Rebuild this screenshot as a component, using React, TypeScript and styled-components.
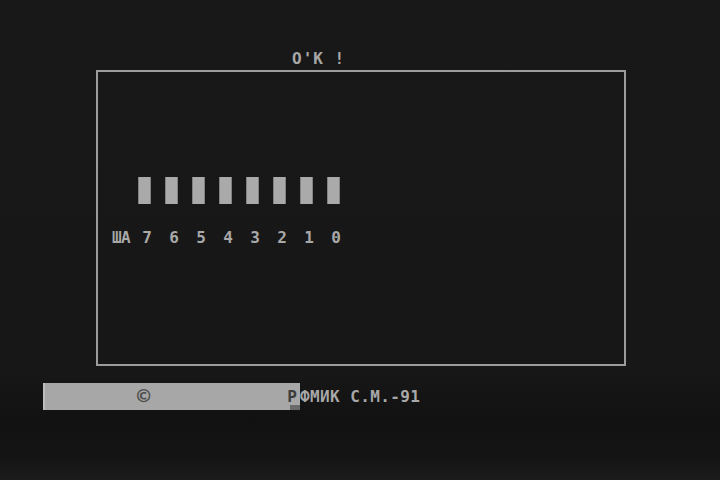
import styled, { createGlobalStyle } from 'styled-components';

const GlobalStyle = createGlobalStyle`
  html, body {
    margin: 0;
    padding: 0;
    background: #161616;
  }
`;

const Screen = styled.div`
  width: 720px;
  height: 480px;
  box-sizing: border-box;
  padding-top: 51px;
  display: flex;
  flex-direction: column;
  background: linear-gradient(
    to bottom,
    #181818 0%,
    #171717 78%,
    #111111 88%,
    #151515 96%,
    #1c1c1c 100%
  );
  font-family: 'DejaVu Sans Mono', 'Liberation Mono', monospace;
  font-weight: bold;
  font-size: 16px;
  line-height: 16px;
  color: #a8a8a8;
  overflow: hidden;
`;

const Title = styled.div`
  margin-left: 292px;
  height: 19px;
  letter-spacing: 1px;
  white-space: pre;
`;

const Frame = styled.div`
  margin-left: 96px;
  width: 530px;
  height: 296px;
  box-sizing: border-box;
  border: 2px solid #9c9c9c;
  padding: 105px 0 0 14px;
`;

const Register = styled.div`
  display: grid;
  grid-template-columns: 19px repeat(8, 27px);
  grid-template-rows: 27px 16px;
  row-gap: 26px;
`;

const Cell = styled.div`
  display: flex;
  justify-content: center;
`;

const Bit = styled.div`
  width: 13px;
  height: 27px;
  background: #aaaaaa;
  box-shadow: inset 1px 0 0 #828282, inset -1px 0 0 #828282;
`;

const Label = styled.div`
  letter-spacing: -0.6px;
  white-space: nowrap;
`;

const Digit = styled.div`
  text-align: center;
  padding-left: 5px;
`;

const Footer = styled.div`
  margin: 17px 0 0 43px;
  display: flex;
  align-items: center;
`;

const Progress = styled.div`
  width: 257px;
  height: 27px;
  box-sizing: border-box;
  background: #a7a7a7;
  border-left: 2px solid #bdbdbd;
  display: flex;
  align-items: center;
  padding-left: 92px;
  color: #4a4a4a;
  position: relative;
`;

const Copy = styled.span`
  font-size: 22px;
  line-height: 22px;
  font-weight: bold;
  color: #505050;
  flex: 1;
`;

const Cursor = styled.span`
  margin-right: 3px;
  color: #3c3c3c;
`;

const Notch = styled.span`
  position: absolute;
  right: 0;
  bottom: 0;
  width: 10px;
  height: 5px;
  background: #6a6a6a;
`;

const Credit = styled.span`
  letter-spacing: 0.4px;
  white-space: pre;
`;

const bits = [7, 6, 5, 4, 3, 2, 1, 0];

export default function App() {
  return (
    <>
      <GlobalStyle />
      <Screen>
        <Title>O'K !</Title>
        <Frame>
          <Register>
            <div />
            {bits.map((b) => (
              <Cell key={'bar' + b}>
                <Bit />
              </Cell>
            ))}
            <Label>ША</Label>
            {bits.map((b) => (
              <Digit key={'d' + b}>{b}</Digit>
            ))}
          </Register>
        </Frame>
        <Footer>
          <Progress>
            <Copy>©</Copy>
            <Cursor>Р</Cursor>
            <Notch />
          </Progress>
          <Credit>ФМИК С.М.-91</Credit>
        </Footer>
      </Screen>
    </>
  );
}
